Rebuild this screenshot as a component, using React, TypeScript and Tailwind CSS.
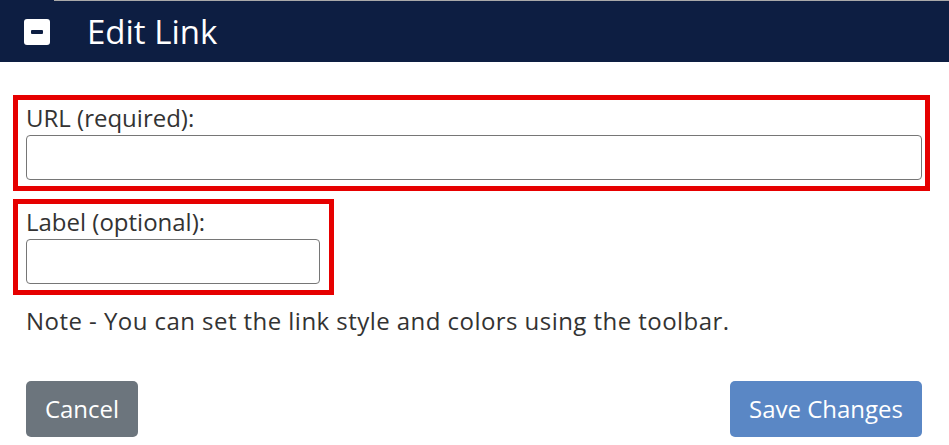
import React from 'react';

function FieldBox({
  label,
  boxWidth,
  inputWidth,
}: {
  label: string;
  boxWidth: string;
  inputWidth: string;
}) {
  return (
    <div className={`border-[5px] border-[#e60000] pl-[8px] pt-[1px] pb-[6px] ${boxWidth}`}>
      <label className="block text-[24px] leading-[33px] text-[#333333]">{label}</label>
      <input
        type="text"
        className={`mt-[1px] block h-[45px] rounded-[4px] border border-[#767676] bg-white ${inputWidth}`}
      />
    </div>
  );
}

export default function App() {
  return (
    <div
      className="w-[949px] h-[445px] overflow-hidden bg-white"
      style={{ fontFamily: '"Open Sans", "Liberation Sans", sans-serif' }}
    >
      <div className="flex h-[1px]">
        <div className="w-[54px] bg-[#0d1e42]" />
        <div className="flex-1 bg-[#a9a9a9]" />
      </div>
      <div className="flex h-[61px] items-center bg-[#0d1e42] pl-[24px]">
        <div className="flex h-[26px] w-[26px] items-center justify-center rounded-[3px] bg-white">
          <div className="h-[4px] w-[12px] rounded-[1px] bg-[#0d1e42]" />
        </div>
        <h1 className="ml-[37px] text-[33px] leading-none text-white">Edit Link</h1>
      </div>

      <div className="pl-[13px] pt-[33px]">
        <FieldBox label="URL (required):" boxWidth="w-[917px]" inputWidth="w-[896px]" />
        <div className="mt-[8px]">
          <FieldBox label="Label (optional):" boxWidth="w-[321px]" inputWidth="w-[294px]" />
        </div>
        <p className="ml-[13px] mt-[9px] text-[24px] leading-[33px] tracking-[0.45px] text-[#333333]">
          Note - You can set the link style and colors using the toolbar.
        </p>
      </div>

      <div className="mt-[44px] flex justify-between pl-[26px] pr-[27px]">
        <button className="h-[56px] w-[112px] rounded-[5px] bg-[#6c757d] text-[24px] text-white">
          Cancel
        </button>
        <button className="h-[56px] w-[192px] rounded-[5px] bg-[#5a87c5] text-[24px] text-white">
          Save Changes
        </button>
      </div>
    </div>
  );
}
